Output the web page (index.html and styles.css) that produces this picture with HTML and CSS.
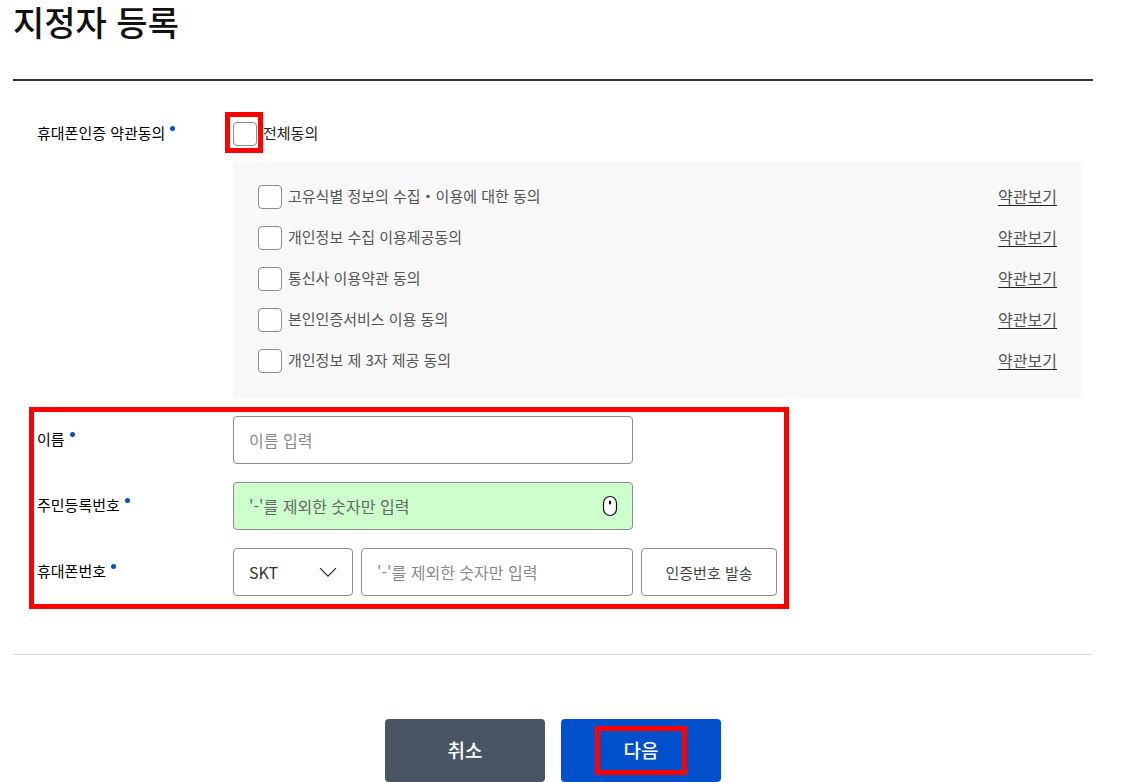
FILE: index.html
```html
<!DOCTYPE html>
<html lang="ko">
<head>
    <meta charset="UTF-8">
    <meta name="viewport" content="width=device-width, initial-scale=1.0">
    <title>지정자 등록</title>
    <link rel="stylesheet" href="styles.css">
</head>
<body>
<main class="container">
    <h1 class="page-title">지정자 등록</h1>

    <form class="register-form">
        <div class="form-row agree-row">
            <label class="form-label required" for="agreeAll">휴대폰인증 약관동의</label>
            <div class="agree-all">
                <span class="check-mark-box highlight"><input type="checkbox" class="check" id="agreeAll"></span>
                <label for="agreeAll">전체동의</label>
            </div>
        </div>

        <ul class="terms">
            <li>
                <input type="checkbox" class="check" id="term1">
                <label for="term1">고유식별 정보의 수집・이용에 대한 동의</label>
                <a href="#" class="terms-link">약관보기</a>
            </li>
            <li>
                <input type="checkbox" class="check" id="term2">
                <label for="term2">개인정보 수집 이용제공동의</label>
                <a href="#" class="terms-link">약관보기</a>
            </li>
            <li>
                <input type="checkbox" class="check" id="term3">
                <label for="term3">통신사 이용약관 동의</label>
                <a href="#" class="terms-link">약관보기</a>
            </li>
            <li>
                <input type="checkbox" class="check" id="term4">
                <label for="term4">본인인증서비스 이용 동의</label>
                <a href="#" class="terms-link">약관보기</a>
            </li>
            <li>
                <input type="checkbox" class="check" id="term5">
                <label for="term5">개인정보 제 3자 제공 동의</label>
                <a href="#" class="terms-link">약관보기</a>
            </li>
        </ul>

        <div class="fields highlight">
            <div class="form-row">
                <label class="form-label required" for="userName">이름</label>
                <div class="field">
                    <input type="text" class="text-input" id="userName" placeholder="이름 입력">
                </div>
            </div>
            <div class="form-row">
                <label class="form-label required" for="userNumber">주민등록번호</label>
                <div class="field">
                    <input type="text" class="text-input secure" id="userNumber" placeholder="'-'를 제외한 숫자만 입력">
                    <svg class="field-icon" width="16" height="22" viewBox="0 0 16 22" aria-hidden="true">
                        <rect x="1.5" y="1.5" width="13" height="19" rx="6.5" fill="#fff" stroke="#111" stroke-width="1.2"/>
                        <path d="M8 6.6v1.8" stroke="#000" stroke-width="2" stroke-linecap="round"/>
                    </svg>
                </div>
            </div>
            <div class="form-row">
                <label class="form-label required" for="phone">휴대폰번호</label>
                <div class="phone">
                    <div class="field phone-group">
                        <div class="select-box">
                            <select id="carrier" class="text-input" aria-label="통신사">
                                <option>SKT</option>
                                <option>KT</option>
                                <option>LG U+</option>
                            </select>
                            <svg class="select-arrow" width="18" height="11" viewBox="0 0 18 11" aria-hidden="true">
                                <path d="M1 1.2 9 9.2 17 1.2" fill="none" stroke="#222" stroke-width="1.2"/>
                            </svg>
                        </div>
                        <input type="tel" class="text-input" id="phone" placeholder="'-'를 제외한 숫자만 입력">
                    </div>
                    <button type="button" class="send-button">인증번호 발송</button>
                </div>
            </div>
        </div>

        <div class="controls">
            <button type="button" class="button cancel">취소</button>
            <button type="submit" class="button next"><span class="highlight">다음</span></button>
        </div>
    </form>
</main>
</body>
</html>
```

FILE: styles.css
```css
*,
*::before,
*::after {
    box-sizing: border-box;
}

body {
    margin: 0;
    font-family: 'Noto Sans CJK KR', 'Noto Sans', sans-serif;
    font-size: 15px;
    line-height: 24px;
    color: #222;
    background-color: #fff;
}

input,
select,
button {
    font-family: inherit;
    margin: 0;
}

label,
.terms-link {
    padding-bottom: 2px;
}

.container {
    padding: 0 43px 0 13px;
}

.page-title {
    margin: 0;
    padding-bottom: 35px;
    border-bottom: 2px solid #333;
    font-size: 34px;
    font-weight: 500;
    line-height: 44px;
    color: #111;
}

.register-form {
    padding-top: 40px;
}

.form-row {
    display: grid;
    grid-template-columns: 196px 1fr;
    align-items: center;
    padding-left: 24px;
}

.form-label {
    color: #000;
}

.required::after {
    content: "";
    display: inline-block;
    width: 5px;
    height: 5px;
    margin-left: 5px;
    border-radius: 50%;
    background-color: #0050cc;
    vertical-align: 8px;
}

.agree-all {
    display: flex;
    align-items: center;
    gap: 6px;
}

.check-mark-box {
    display: flex;
}

.check {
    appearance: none;
    flex: none;
    width: 24px;
    height: 24px;
    border: 1px solid #8a8d92;
    border-radius: 4px;
    background-color: #fff;
}

.check:checked {
    background-color: #0050cc;
}

.terms {
    display: grid;
    gap: 15px;
    margin: 15px 12px 0 220px;
    padding: 22px 24px 24px 25px;
    list-style: none;
    background-color: #f8f8f8;
    color: #555;
}

.terms li {
    display: flex;
    align-items: center;
    gap: 6px;
}

.terms-link {
    margin-left: auto;
    font-size: 16px;
    color: #555;
    text-decoration-color: #222;
    text-underline-offset: 2px;
}

.fields {
    display: grid;
    gap: 18px;
    margin-top: 18px;
}

.field {
    position: relative;
    width: 100%;
    max-width: 400px;
}

.text-input {
    appearance: none;
    display: block;
    width: 100%;
    height: 48px;
    padding: 0 15px;
    border: 1px solid #8a8d92;
    border-radius: 4px;
    background-color: #fff;
    font-size: 16px;
    color: #333;
}

.text-input::placeholder {
    color: #8a8a8a;
}

.text-input.secure {
    background-color: #ccffcc;
}

.text-input.secure::placeholder {
    color: #666;
}

.field-icon {
    position: absolute;
    top: 13px;
    right: 15px;
}

.phone {
    display: flex;
    gap: 8px;
}

.phone-group {
    display: grid;
    grid-template-columns: 120px 1fr;
    gap: 8px;
}

.select-box {
    position: relative;
}

.select-arrow {
    position: absolute;
    top: 19px;
    right: 16px;
    pointer-events: none;
}

.send-button {
    min-width: 136px;
    padding: 0 16px;
    border: 1px solid #8a8d92;
    border-radius: 4px;
    background-color: #fff;
    font-size: 15px;
    color: #444;
    white-space: nowrap;
    cursor: pointer;
}

.controls {
    display: flex;
    justify-content: center;
    gap: 16px;
    margin-top: 58px;
    padding-top: 64px;
    border-top: 1px solid #ddd;
}

.button {
    width: 160px;
    height: 63px;
    padding: 0 0 2px;
    border: none;
    border-radius: 4px;
    font-size: 19px;
    font-weight: 500;
    color: #fff;
    cursor: pointer;
}

.cancel {
    background-color: #4a5564;
}

.next {
    background-color: #0050cc;
}

/* red guide boxes over the steps to fill in */
.highlight {
    position: relative;
}

.highlight::before {
    content: "";
    position: absolute;
    inset: -10px -6px -7px -8px;
    border: 5px solid #f00;
    pointer-events: none;
}

.fields.highlight::before {
    inset: -9px auto -13px 16px;
    width: 760px;
}

.next .highlight::before {
    inset: -10px -29px -12px;
}
```
